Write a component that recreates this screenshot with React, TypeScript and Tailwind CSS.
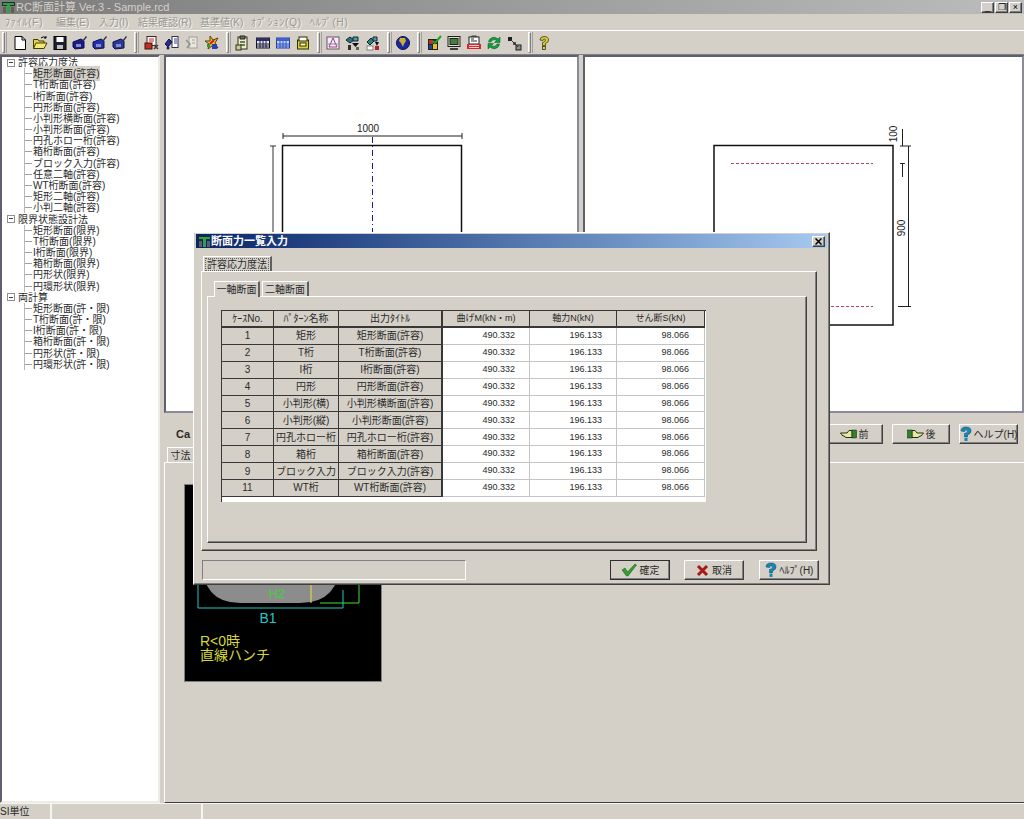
import type { ReactNode } from "react";

const raised =
  "border border-t-white border-l-white border-r-[#404040] border-b-[#404040] shadow-[inset_-1px_-1px_0_#808080]";
const sunkenPane =
  "border-2 border-t-[#5f5f70] border-l-[#5f5f70] border-r-[#8a8a98] border-b-[#8a8a98]";

const tree = [
  {
    name: "許容応力度法",
    items: [
      "矩形断面(許容)",
      "T桁断面(許容)",
      "I桁断面(許容)",
      "円形断面(許容)",
      "小判形横断面(許容)",
      "小判形断面(許容)",
      "円孔ホロー桁(許容)",
      "箱桁断面(許容)",
      "ブロック入力(許容)",
      "任意二軸(許容)",
      "WT桁断面(許容)",
      "矩形二軸(許容)",
      "小判二軸(許容)",
    ],
  },
  {
    name: "限界状態設計法",
    items: [
      "矩形断面(限界)",
      "T桁断面(限界)",
      "I桁断面(限界)",
      "箱桁断面(限界)",
      "円形状(限界)",
      "円環形状(限界)",
    ],
  },
  {
    name: "両計算",
    items: [
      "矩形断面(許・限)",
      "T桁断面(許・限)",
      "I桁断面(許・限)",
      "箱桁断面(許・限)",
      "円形状(許・限)",
      "円環形状(許・限)",
    ],
  },
];

const rows = [
  ["1", "矩形", "矩形断面(許容)"],
  ["2", "T桁", "T桁断面(許容)"],
  ["3", "I桁", "I桁断面(許容)"],
  ["4", "円形", "円形断面(許容)"],
  ["5", "小判形(横)", "小判形横断面(許容)"],
  ["6", "小判形(縦)", "小判形断面(許容)"],
  ["7", "円孔ホロー桁", "円孔ホロー桁(許容)"],
  ["8", "箱桁", "箱桁断面(許容)"],
  ["9", "ブロック入力", "ブロック入力(許容)"],
  ["11", "WT桁", "WT桁断面(許容)"],
];

const menus = [
  { label: "ﾌｧｲﾙ(F)", kana: true },
  { label: "編集(E)", kana: false },
  { label: "入力(I)", kana: false },
  { label: "結果確認(R)", kana: false },
  { label: "基準値(K)", kana: false },
  { label: "ｵﾌﾟｼｮﾝ(Q)", kana: true },
  { label: "ﾍﾙﾌﾟ(H)", kana: true },
];

function Ico({ children }: { children: ReactNode }) {
  return (
    <svg width="16" height="16" viewBox="0 0 16 16" className="block">
      {children}
    </svg>
  );
}

function Disk({ fill }: { fill: string }) {
  return (
    <Ico>
      <path d="M1 7 L9 4 L12 6 L12 13 L3 14 L1 12 Z" fill={fill} stroke="#101040" />
      <rect x="4" y="9" width="5" height="3" fill="#8a8ac0" />
      <path d="M10 6 L14 1 L15 2 L11 7 Z" fill="#303050" />
    </Ico>
  );
}

const icons: Record<string, ReactNode> = {
  file: (
    <Ico>
      <path d="M3 1.5 H10 L13.5 5 V14.5 H3 Z" fill="#fff" stroke="#000" />
      <path d="M10 1.5 V5 H13.5" fill="none" stroke="#000" />
    </Ico>
  ),
  open: (
    <Ico>
      <path d="M1.5 13.5 V4.5 H6 L7 6 H12 V13.5 Z" fill="#e8d048" stroke="#404000" />
      <path d="M1.5 13.5 L4 8 H15 L12 13.5 Z" fill="#f4e878" stroke="#404000" />
      <path d="M9 3 Q12 0.5 14 3 M14 3 L14 1 M14 3 L12 3" fill="none" stroke="#000" />
    </Ico>
  ),
  save: (
    <Ico>
      <rect x="2" y="1.5" width="12" height="13" fill="#202030" stroke="#000" />
      <rect x="4.5" y="2" width="7" height="5" fill="#fff" />
      <rect x="5" y="10" width="6" height="4" fill="#c0c0c8" />
    </Ico>
  ),
  disk1: <Disk fill="#1a1a90" />,
  disk2: <Disk fill="#2030b0" />,
  disk3: <Disk fill="#2a3a98" />,
  print1: (
    <Ico>
      <rect x="3" y="1.5" width="9" height="9" fill="#fff" stroke="#402020" />
      <path d="M5 4 H10 M5 6 H10" stroke="#c02020" />
      <rect x="1" y="8" width="7" height="6" fill="#c03020" stroke="#401010" />
      <path d="M10 10 L14 14 M14 10 L10 14" stroke="#404040" strokeWidth="1.5" />
    </Ico>
  ),
  print2: (
    <Ico>
      <rect x="8" y="1.5" width="6" height="11" fill="#fff" stroke="#303050" />
      <path d="M1 9 L5 4 L8 7 L4 12 Z" fill="#2a2a90" stroke="#101040" />
      <circle cx="4" cy="13" r="1.5" fill="#202060" />
      <path d="M10 4 H13 M10 6 H13 M10 8 H13" stroke="#404080" />
    </Ico>
  ),
  print3: (
    <Ico>
      <rect x="5" y="2" width="8" height="11" fill="#e8e8e0" stroke="#a0a098" />
      <path d="M2 5 L6 9 L3 13" fill="none" stroke="#909088" strokeWidth="1.5" />
      <path d="M8 5 H11 M8 8 H11" stroke="#a0a098" />
    </Ico>
  ),
  multi: (
    <Ico>
      <path d="M6 1 L9 5 L14 3 L11 8 L14 13 L8 11 L4 14 L5 9 L1 6 L6 6 Z" fill="#e8c030" stroke="#604000" />
      <path d="M6 9 L10 5" stroke="#d02020" strokeWidth="2" />
      <rect x="8" y="9" width="5" height="5" fill="#2040c0" />
      <rect x="3" y="9" width="3" height="3" fill="#20a040" />
    </Ico>
  ),
  edit: (
    <Ico>
      <rect x="3" y="2" width="9" height="12" fill="#f0ecc8" stroke="#303020" />
      <path d="M5 1 H10 V4 H5 Z" fill="#707060" stroke="#202020" />
      <path d="M5 7 H10 M5 10 H10" stroke="#306030" strokeWidth="1.5" />
      <rect x="1" y="10" width="5" height="5" fill="#d0c890" stroke="#303020" />
    </Ico>
  ),
  grid1: (
    <Ico>
      <rect x="1.5" y="3" width="13" height="10" fill="#e8e8f0" stroke="#101030" />
      <rect x="1.5" y="3" width="13" height="3" fill="#303060" />
      <path d="M5 6 V13 M8 6 V13 M11 6 V13 M2 9 H14 M2 11 H14" stroke="#202040" />
    </Ico>
  ),
  grid2: (
    <Ico>
      <rect x="1.5" y="3" width="13" height="10" fill="#c8d4f8" stroke="#2040a0" />
      <rect x="1.5" y="3" width="13" height="3" fill="#4060d0" />
      <path d="M5 6 V13 M8 6 V13 M11 6 V13 M2 9 H14 M2 11 H14" stroke="#3050c0" />
    </Ico>
  ),
  calc: (
    <Ico>
      <rect x="2.5" y="5" width="11" height="9" fill="#d8d040" stroke="#303000" />
      <rect x="4" y="2" width="8" height="4" fill="#fff" stroke="#303000" />
      <rect x="5" y="8" width="6" height="3" fill="#f8f8e0" stroke="#303000" />
    </Ico>
  ),
  chart: (
    <Ico>
      <rect x="2" y="2" width="12" height="12" fill="#f4eef4" stroke="#705070" />
      <path d="M8 3 L12 12 H4 Z" fill="none" stroke="#a04080" />
      <path d="M3 9 H13" stroke="#8080a0" />
    </Ico>
  ),
  net1: (
    <Ico>
      <path d="M1 5 L5 2 L9 5 L5 8 Z" fill="#307080" stroke="#102030" />
      <path d="M8 2 H13 V6 H8 Z" fill="#50a0a0" stroke="#102030" />
      <path d="M7 8 H14 L10.5 12 Z" fill="#101010" />
      <rect x="3" y="10" width="3" height="5" fill="#303030" />
      <rect x="11" y="12" width="3" height="3" fill="#606060" />
    </Ico>
  ),
  net2: (
    <Ico>
      <path d="M2 7 L6 3 L9 6 L5 10 Z" fill="#308080" stroke="#102030" />
      <path d="M8 2 H12 V6 H8 Z" fill="#50a0a0" stroke="#102030" />
      <path d="M10 7 H14 L12 11 Z" fill="#101010" />
      <rect x="10" y="11" width="4" height="4" fill="#b02030" />
      <rect x="2" y="11" width="6" height="4" fill="#fff" stroke="#808080" />
    </Ico>
  ),
  globe: (
    <Ico>
      <circle cx="8" cy="8" r="6.5" fill="#1a28a0" stroke="#101050" />
      <path d="M5 3 L10 3 L11 6 L9 9 L8 12 L6 8 L4 6 Z" fill="#c8b030" />
    </Ico>
  ),
  check: (
    <Ico>
      <rect x="2" y="4" width="10" height="11" fill="#202020" />
      <rect x="3" y="5" width="4" height="4" fill="#c03020" />
      <rect x="7" y="9" width="4" height="5" fill="#e8c020" />
      <rect x="3" y="10" width="3" height="4" fill="#2040b0" />
      <path d="M7 6 L9 8 L15 1" fill="none" stroke="#20a020" strokeWidth="2" />
    </Ico>
  ),
  monitor: (
    <Ico>
      <rect x="2" y="1.5" width="12" height="10" fill="#e0e0c8" stroke="#202020" />
      <rect x="4" y="3.5" width="8" height="6" fill="#408040" stroke="#202020" />
      <path d="M4 14 H12" stroke="#404040" strokeWidth="2" />
    </Ico>
  ),
  pdf: (
    <Ico>
      <rect x="3" y="2" width="10" height="7" fill="#fff" stroke="#202020" />
      <path d="M4 2 L6 0.5 H10 L12 2" fill="#404040" />
      <path d="M5 4 H8 M5 6 H11" stroke="#303030" />
      <rect x="1" y="9" width="14" height="5" fill="#d02830" />
      <path d="M3 10.5 H13 M3 12.5 H13" stroke="#f8d0d0" />
    </Ico>
  ),
  sync: (
    <Ico>
      <path d="M2.5 7 A5.5 5.5 0 0 1 12 4 L14 2 V7.5 H8.5 L10.5 5.5 A3.5 3.5 0 0 0 5 7 Z" fill="#10a040" stroke="#085020" strokeWidth="0.5" />
      <path d="M13.5 9 A5.5 5.5 0 0 1 4 12 L2 14 V8.5 H7.5 L5.5 10.5 A3.5 3.5 0 0 0 11 9 Z" fill="#10a040" stroke="#085020" strokeWidth="0.5" />
    </Ico>
  ),
  nodes: (
    <Ico>
      <rect x="2" y="2" width="4" height="4" fill="#202020" />
      <rect x="7" y="7" width="3" height="3" fill="#505050" />
      <rect x="10" y="10" width="5" height="5" fill="#809090" stroke="#202020" />
      <path d="M5 5 L12 12" stroke="#303030" />
    </Ico>
  ),
  help: (
    <Ico>
      <path d="M4 5 Q4 1.5 8 1.5 Q12.5 1.5 12.5 5 Q12.5 7.5 9.5 8.5 V10.5 H6.5 V7.5 Q9.5 7 9.5 5 Q9 3.8 8 4 Q7 4 7 5.5 Z" fill="#d8d040" stroke="#404000" strokeWidth="0.8" />
      <rect x="6.5" y="11.5" width="3" height="3" fill="#d8d040" stroke="#404000" strokeWidth="0.8" />
    </Ico>
  ),
};

const groups = [
  { gap: "ml-[2px]", items: ["file", "open", "save", "disk1", "disk2", "disk3"] },
  { gap: "ml-[2px]", items: ["print1", "print2", "print3", "multi"] },
  { gap: "ml-[1px]", items: ["edit", "grid1", "grid2", "calc"] },
  { gap: "ml-0", items: ["chart", "net1", "net2"] },
  { gap: "ml-0", items: ["globe"] },
  { gap: "ml-[1px]", items: ["check", "monitor", "pdf", "sync", "nodes"] },
  { gap: "ml-0", items: ["help"] },
];

function AppIcon() {
  return (
    <svg width="13" height="13" viewBox="0 0 13 13" className="block shrink-0">
      <rect x="0" y="1" width="13" height="4" fill="#203020" />
      <rect x="1" y="2" width="11" height="2" fill="#30a050" />
      <rect x="5" y="4" width="3" height="8" fill="#30a050" />
      <rect x="1" y="6" width="3" height="6" fill="#606050" />
      <rect x="9" y="6" width="3" height="6" fill="#606050" />
    </svg>
  );
}

function HelpMark() {
  return (
    <svg width="12" height="16" viewBox="0 0 12 16" className="block shrink-0">
      <path d="M1 5 Q1 1 6 1 Q11 1 11 5 Q11 7.5 7.5 9 V11 H4.5 V7.5 Q7.5 7 7.5 5 Q7 3.6 6 3.8 Q4.7 4 4.7 5.6 Z" fill="#1088b8" stroke="#084060" strokeWidth="0.5" />
      <rect x="4.5" y="12" width="3" height="3" fill="#1088b8" />
    </svg>
  );
}

function Hand({ flip }: { flip?: boolean }) {
  return (
    <svg width="17" height="10" viewBox="0 0 17 10" className={flip ? "block -scale-x-100" : "block"}>
      <path d="M0.5 4 H7 L9 1.5 H12 V8.5 H6 L4 7 H3 Z" fill="#e8e8a0" stroke="#203010" />
      <rect x="12" y="1" width="4.5" height="8" fill="#308030" stroke="#102010" strokeWidth="0.5" />
    </svg>
  );
}

function Grip() {
  return (
    <div className="flex h-[21px] w-[6px] shrink-0 gap-px">
      <div className="w-[3px] border-t border-l border-r border-b border-t-white border-l-white border-r-[#808080] border-b-[#808080]" />
      <div className="w-px bg-[#a0a0a0]" />
    </div>
  );
}

function TreeView() {
  return (
    <div className="flex h-full w-[160px] shrink-0 flex-col border-2 border-t-[#5f5f70] border-l-[#5f5f70] border-r-[#ecebe6] border-b-[#ecebe6] bg-white pl-[5px]">
      {tree.map((group, g) => (
        <div key={group.name} className="flex flex-col">
          <div className="flex h-[11.185px] items-center">
            <div className="flex h-[8px] w-[8px] items-center justify-center border border-[#909090]">
              <div className="h-px w-[4px] bg-[#404040]" />
            </div>
            <span className="ml-[3px] whitespace-nowrap">{group.name}</span>
          </div>
          <div className="ml-[17px] flex flex-col border-l border-[#b8b8b8]">
            {group.items.map((item, i) => (
              <div key={item} className="flex h-[11.185px] items-center">
                <div className="mr-px h-px w-[7px] shrink-0 bg-[#a0a0a0]" />
                <span className={`whitespace-nowrap ${g === 0 && i === 0 ? "bg-[#d4d0c8]" : ""}`}>{item}</span>
              </div>
            ))}
          </div>
        </div>
      ))}
    </div>
  );
}

function SectionViews() {
  return (
    <div className="flex h-[358px] shrink-0 gap-[4px]">
      <div className={`w-[415px] bg-white ${sunkenPane}`}>
        <svg width="411" height="354" viewBox="166 57 411 354" className="block">
          <rect x="282.5" y="145.5" width="179" height="180" fill="none" stroke="#101010" strokeWidth="1.5" />
          <path d="M283 136 H462 M283 133 V139 M462 133 V139" stroke="#202020" fill="none" />
          <path d="M372.5 137 V411" stroke="#202080" strokeDasharray="6 3 1 3" />
          <path d="M273 146 V325 M270 146 H276" stroke="#303030" fill="none" />
          <text x="368" y="132" textAnchor="middle" fontSize="10" fill="#202020" fontFamily="Liberation Sans">1000</text>
          <text transform="translate(269 252) rotate(-90)" fontSize="10" textAnchor="middle" fill="#202020" fontFamily="Liberation Sans">1000</text>
        </svg>
      </div>
      <div className={`min-w-0 flex-1 bg-white ${sunkenPane}`}>
        <svg width="437" height="354" viewBox="585 57 437 354" className="block">
          <rect x="714" y="145.5" width="179" height="179.5" fill="none" stroke="#101010" strokeWidth="1.5" />
          <path d="M731 163.5 H873 M731 306.5 H873" stroke="#b84060" strokeDasharray="3 2" />
          <path d="M908.5 146 V306 M900 146 H911 M898 306.5 H911 M902.5 129 V146 M902.5 163 V177 M900 163.5 H905" stroke="#202020" fill="none" />
          <text transform="translate(897 134) rotate(-90)" fontSize="10" textAnchor="middle" fill="#202020" fontFamily="Liberation Sans">100</text>
          <text transform="translate(905 228) rotate(-90)" fontSize="10" textAnchor="middle" fill="#202020" fontFamily="Liberation Sans">900</text>
        </svg>
      </div>
    </div>
  );
}

function BackButton({ icon, label, width }: { icon: ReactNode; label: string; width: string }) {
  return (
    <button className={`flex h-[20px] items-center justify-center gap-[2px] whitespace-nowrap bg-[#d4d0c8] ${width} ${raised}`}>
      {icon}
      <span>{label}</span>
    </button>
  );
}

function HaunchFigure() {
  return (
    <div className="h-[198px] w-[198px] border border-[#808080] bg-black">
      <svg width="196" height="196" viewBox="185 485 196 196" className="block">
        <path d="M202 560 H340 Q340 603 300 603 H240 Q202 603 202 560 Z" fill="#8c8c8c" />
        <path d="M198 570 V608 H343 V590" stroke="#20c8c8" fill="none" />
        <path d="M320 603 H359 V570" stroke="#40e040" fill="none" />
        <path d="M311 570 V603" stroke="#e8e040" />
        <text x="268" y="623" textAnchor="middle" fontSize="14" fill="#20c8c8" fontFamily="Liberation Sans">B1</text>
        <text x="277" y="598" textAnchor="middle" fontSize="13" fill="#40d040" fontFamily="Liberation Sans">H2</text>
        <text x="200" y="646" fontSize="14" fill="#d8d838" fontFamily="Liberation Sans, Noto Sans CJK JP">R&lt;0時</text>
        <text x="200" y="660" fontSize="14" fill="#d8d838" fontFamily="Liberation Sans, Noto Sans CJK JP">直線ハンチ</text>
      </svg>
    </div>
  );
}

function InputTable() {
  const head = "flex items-center justify-center border-r border-b-2 border-[#383838] bg-[#d4d0c8] whitespace-nowrap";
  const left = "flex items-center justify-center border-r border-b border-[#383838] bg-[#d4d0c8] whitespace-nowrap";
  const num = "flex items-center justify-end border-r border-b border-[#c4c4c4] bg-white pr-[14px] text-[9px]";
  return (
    <div className="ml-[13px] mt-[13px] h-[192px] w-[485px] border-l border-[#383838] bg-white">
      <div className="grid grid-cols-[52px_65px_104px_87px_87px_88px] grid-rows-[17px_repeat(10,16.9px)] border-t border-[#383838]">
        <div className={head}>ｹｰｽNo.</div>
        <div className={head}>ﾊﾟﾀｰﾝ名称</div>
        <div className={`${head} border-r-2`}>出力ﾀｲﾄﾙ</div>
        <div className={`${head} text-[9px]`}>曲げM(kN・m)</div>
        <div className={`${head} text-[9px]`}>軸力N(kN)</div>
        <div className={`${head} text-[9px]`}>せん断S(kN)</div>
        {rows.map((row) => (
          <div key={row[0]} className="contents">
            <div className={left}>{row[0]}</div>
            <div className={left}>{row[1]}</div>
            <div className={`${left} border-r-2`}>{row[2]}</div>
            <div className={num}>490.332</div>
            <div className={num}>196.133</div>
            <div className={`${num} pr-[15px]`}>98.066</div>
          </div>
        ))}
      </div>
    </div>
  );
}

function Dialog() {
  return (
    <div className={`absolute left-[193px] top-[232px] flex h-[353px] w-[637px] flex-col bg-[#d4d0c8] p-px ${raised}`}>
      <div className="mx-px flex h-[14px] shrink-0 items-center bg-gradient-to-r from-[#0a246a] to-[#a6caf0] pl-[2px] pr-[2px]">
        <AppIcon />
        <span className="text-[11px] font-bold text-white">断面力一覧入力</span>
        <div className={`ml-auto flex h-[11px] w-[13px] items-center justify-center bg-[#d4d0c8] ${raised}`}>
          <svg width="7" height="7" viewBox="0 0 7 7" className="block">
            <path d="M0.5 0.5 L6.5 6.5 M6.5 0.5 L0.5 6.5" stroke="#000" strokeWidth="1.5" />
          </svg>
        </div>
      </div>
      <div className="ml-[6px] mt-[8px] flex h-[15px] w-[616px] shrink-0 pl-[2px]">
        <div className="flex w-[69px] items-center justify-center border-t border-l border-r-2 border-t-white border-l-white border-r-[#606060]">
          <span className="border border-dotted border-[#606060] px-px leading-[11px]">許容応力度法</span>
        </div>
      </div>
      <div className={`ml-[6px] h-[280px] w-[616px] shrink-0 pl-[5px] pt-[9px] ${raised}`}>
        <div className="ml-[7px] flex h-[15px]">
          <div className="relative -mb-px flex h-[16px] w-[46px] items-center justify-center border-t border-l border-r-2 border-t-white border-l-white border-r-[#606060] bg-[#d4d0c8]">一軸断面</div>
          <div className="ml-[2px] flex w-[47px] items-center justify-center border-t border-l border-r-2 border-t-white border-l-white border-r-[#606060]">二軸断面</div>
        </div>
        <div className={`h-[247px] w-[600px] ${raised}`}>
          <InputTable />
        </div>
      </div>
      <div className="mt-[9px] flex h-[20px] shrink-0 items-stretch">
        <div className="ml-[7px] w-[264px] border border-t-[#808080] border-l-[#808080] border-r-white border-b-white" />
        <button className={`ml-[144px] flex w-[60px] items-center justify-center gap-[3px] bg-[#d4d0c8] outline outline-1 -outline-offset-1 outline-[#303030] ${raised}`}>
          <svg width="16" height="14" viewBox="0 0 16 14" className="block">
            <path d="M1 7 L4 5 L6.5 9 L14 1 L15.5 2 L7 13 H5.5 Z" fill="#30a030" stroke="#105010" strokeWidth="0.5" />
          </svg>
          確定
        </button>
        <button className={`ml-[14px] flex w-[60px] items-center justify-center gap-[3px] bg-[#d4d0c8] ${raised}`}>
          <svg width="13" height="13" viewBox="0 0 13 13" className="block">
            <path d="M2 2 L11 11 M11 2 L2 11" stroke="#a81818" strokeWidth="3" />
          </svg>
          取消
        </button>
        <button className={`ml-[15px] flex w-[60px] items-center justify-center gap-[3px] whitespace-nowrap bg-[#d4d0c8] ${raised}`}>
          <HelpMark />
          ﾍﾙﾌﾟ(H)
        </button>
      </div>
    </div>
  );
}

export default function App() {
  return (
    <div className="relative flex h-[819px] w-[1024px] flex-col overflow-hidden bg-[#d4d0c8] font-['Liberation_Sans','Noto_Sans_CJK_JP',sans-serif] text-[10px] text-[#2a2a2a]">
      <div className="flex h-[14px] shrink-0 items-center bg-gradient-to-r from-[#7c7c7c] to-[#bcbcbc] pl-[2px] pr-[2px]">
        <AppIcon />
        <span className="ml-px whitespace-pre text-[11px] text-[#d4d0c8]">RC断面計算 Ver.3 - Sample.rcd</span>
        <div className="ml-auto flex gap-px">
          {["_", "❐", "×"].map((c) => (
            <div key={c} className={`flex h-[11px] w-[13px] items-center justify-center bg-[#d4d0c8] text-[9px] leading-none text-black ${raised}`}>
              {c}
            </div>
          ))}
        </div>
      </div>
      <div className="grid h-[16px] shrink-0 grid-cols-[51px_43px_39px_62px_51px_59px_40px] items-center pl-[5px] text-[#9a9890] [text-shadow:1px_1px_0_#f4f4f0]">
        {menus.map((m) => (
          <span key={m.label} className={m.kana ? "whitespace-nowrap tracking-[0.8px]" : "whitespace-nowrap"}>
            {m.label}
          </span>
        ))}
      </div>
      <div className="flex h-[25px] shrink-0 items-center border-t border-t-white border-b border-b-[#808080] pl-[2px]">
        {groups.map((group) => (
          <div key={group.items[0]} className="flex items-center">
            <Grip />
            <div className={`flex ${group.gap}`}>
              {group.items.map((name) => (
                <div key={name} className="flex h-[22px] w-[20px] items-center justify-center">
                  {icons[name]}
                </div>
              ))}
            </div>
            <div className="w-[4px]" />
          </div>
        ))}
      </div>
      <div className="flex min-h-0 flex-1 gap-[4px]">
        <TreeView />
        <div className="flex min-w-0 flex-1 flex-col">
          <SectionViews />
          <div className="flex h-[34px] shrink-0 items-center justify-between pl-[12px] pr-[6px] pt-[8px]">
            <span className="text-[11px] font-bold">Ca</span>
            <div className="flex gap-[9px]">
              <BackButton icon={<Hand />} label="前" width="w-[58px]" />
              <BackButton icon={<Hand flip />} label="後" width="w-[58px]" />
              <BackButton icon={<HelpMark />} label="ヘルプ(H)" width="w-[59px]" />
            </div>
          </div>
          <div className="ml-[3px] flex h-[15px] w-[26px] shrink-0 items-center justify-center border-t border-l border-t-white border-l-white">寸法</div>
          <div className="flex min-h-0 flex-1 border-t border-l border-t-white border-l-white border-b border-b-[#404040] pl-[19px] pt-[21px]">
            <HaunchFigure />
          </div>
        </div>
      </div>
      <div className="flex h-[16px] shrink-0 items-stretch border-t border-[#f4f4f0]">
        <div className="flex w-[52px] items-center border-r-2 border-r-[#f4f4f0]">SI単位</div>
        <div className="w-[151px] border-r-2 border-r-[#f4f4f0]" />
      </div>
      <Dialog />
    </div>
  );
}
